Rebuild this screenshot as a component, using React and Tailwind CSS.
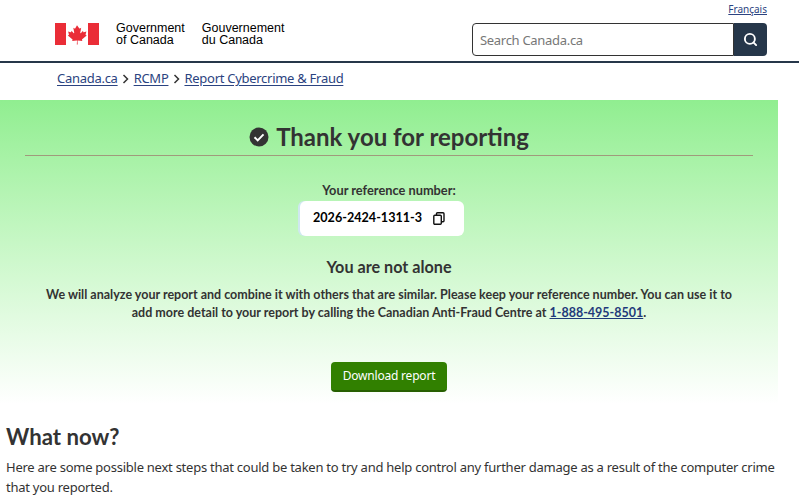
import { Search } from "lucide-react";

function Flag() {
    return (
        <svg width="44" height="22" viewBox="0 0 44 22" className="shrink-0">
            <rect x="0" y="0" width="11" height="22" fill="#ea2d37" />
            <rect x="33" y="0" width="11" height="22" fill="#ea2d37" />
            <path
                fill="#ea2d37"
                d="M22 2.2l-1.7 3.1c-.2.3-.5.3-.8.1l-1.2-.6.9 4.7c.2.9-.4.9-.7.5l-2-2.3-.3 1.2c0 .2-.2.3-.5.3l-2.6-.6.7 2.5c.1.6.3.8-.1 1l-.9.4 4.5 3.7c.2.1.3.4.2.7l-.4 1.2 4.5-.5c.2 0 .4.1.4.4l-.2 3.5h.9l-.2-3.5c0-.3.2-.4.4-.4l4.5.5-.4-1.2c-.1-.3 0-.6.2-.7l4.5-3.7-.9-.4c-.4-.2-.2-.4-.1-1l.7-2.5-2.6.6c-.3 0-.5-.1-.5-.3l-.3-1.2-2 2.3c-.3.4-.9.4-.7-.5l.9-4.7-1.2.6c-.3.2-.6.2-.8-.1z"
            />
        </svg>
    );
}

function Crumb({ children }) {
    return (
        <a href="#" className="text-[#2b4380] underline decoration-1 underline-offset-[2px]">
            {children}
        </a>
    );
}

function Chevron() {
    return (
        <svg width="7" height="10" viewBox="0 0 7 10" className="mx-[4.5px] shrink-0">
            <path d="M1.5 1l4 4-4 4" fill="none" stroke="#333" strokeWidth="1.5" />
        </svg>
    );
}

export default function App() {
    return (
        <div className="h-[500px] overflow-hidden bg-white font-['Noto_Sans',sans-serif] text-[#333]">
            <header className="h-[63px] border-b-2 border-[#26374a] flex justify-between pl-[55px] pr-[32px]">
                <div className="flex items-start pt-[23px]">
                    <Flag />
                    <div className="ml-[17px] -mt-[1px] flex gap-[17px] font-['Liberation_Sans',sans-serif] text-[12.5px] leading-[12px] text-black">
                        <div>Government<br />of Canada</div>
                        <div>Gouvernement<br />du Canada</div>
                    </div>
                </div>
                <div className="flex flex-col items-end pt-[2px]">
                    <a href="#" className="text-[10px] leading-[14px] text-[#2b4380] underline">
                        Français
                    </a>
                    <div className="mt-[7px] flex h-[33px] w-[295px]">
                        <div className="flex-1 flex items-center border-[1.5px] border-[#333] rounded-l-[4px] pl-[7px] pt-[2px] text-[13px] tracking-[-0.3px] text-[#777]">
                            Search Canada.ca
                        </div>
                        <div className="w-[33px] flex items-center justify-center bg-[#26374a] rounded-r-[4px]">
                            <Search size={15} strokeWidth={3} color="#fff" />
                        </div>
                    </div>
                </div>
            </header>

            <nav className="h-[37px] flex items-center pl-[57px] pb-[5px] text-[13px] tracking-[-0.28px]">
                <Crumb>Canada.ca</Crumb>
                <Chevron />
                <Crumb>RCMP</Crumb>
                <Chevron />
                <Crumb>Report Cybercrime &amp; Fraud</Crumb>
            </nav>

            <section className="w-[778px] h-[304px] bg-gradient-to-b from-[#90ee90] to-white flex flex-col items-center px-[25px] font-['Lato',sans-serif]">
                <h1 className="w-full h-[56px] border-b border-[#a09a7c] flex items-end justify-center gap-[7px] pb-[2px] text-[24px] leading-[32px] font-bold">
                    <svg width="20" height="20" viewBox="0 0 20 20" className="mb-[6px]">
                        <circle cx="10" cy="10" r="9.5" fill="#333" />
                        <path d="M5.5 10.2l3.2 3.2 5.8-6" fill="none" stroke="#fff" strokeWidth="2" />
                    </svg>
                    Thank you for reporting
                </h1>
                <div className="mt-[26px] text-[12.8px] font-bold leading-[17px]">Your reference number:</div>
                <div className="mt-[2px] -ml-[14px] w-[164px] h-[35px] bg-white rounded-[6px] shadow-[-2px_0_0_#cfe8f0] flex items-center pl-[13px] text-[12.6px] font-bold text-black">
                    2026-2424-1311-3
                    <svg width="12" height="13" viewBox="0 0 12 13" className="ml-[11px]">
                        <rect x="3.5" y="0.8" width="7.5" height="9" rx="1" fill="none" stroke="#111" strokeWidth="1.4" />
                        <rect x="0.8" y="3.2" width="7.5" height="9" rx="1" fill="#fff" stroke="#111" strokeWidth="1.4" />
                    </svg>
                </div>
                <h2 className="mt-[20px] text-[16.2px] font-bold leading-[22px]">You are not alone</h2>
                <p className="mt-[8px] w-[695px] text-center text-[12.5px] font-bold leading-[18px]">
                    We will analyze your report and combine it with others that are similar. Please keep your reference number. You can use it to add more detail to your report by calling the Canadian Anti-Fraud Centre at{" "}
                    <a href="#" className="text-[#1f3a7a] underline">1-888-495-8501</a>.
                </p>
                <button className="mt-[40px] w-[116px] h-[30px] rounded-[4px] bg-[#318000] border-b-2 border-[#265f00] text-white text-[12px] tracking-[-0.2px] font-['Noto_Sans',sans-serif]">
                    Download report
                </button>
            </section>

            <section className="px-[6px]">
                <h2 className="mt-[18px] font-['Lato',sans-serif] text-[22.2px] leading-[30px] font-bold">What now?</h2>
                <p className="mt-[5px] text-[13px] tracking-[-0.25px] leading-[20px]">
                    Here are some possible next steps that could be taken to try and help control any further damage as a result of the computer crime that you reported.
                </p>
            </section>
        </div>
    );
}
